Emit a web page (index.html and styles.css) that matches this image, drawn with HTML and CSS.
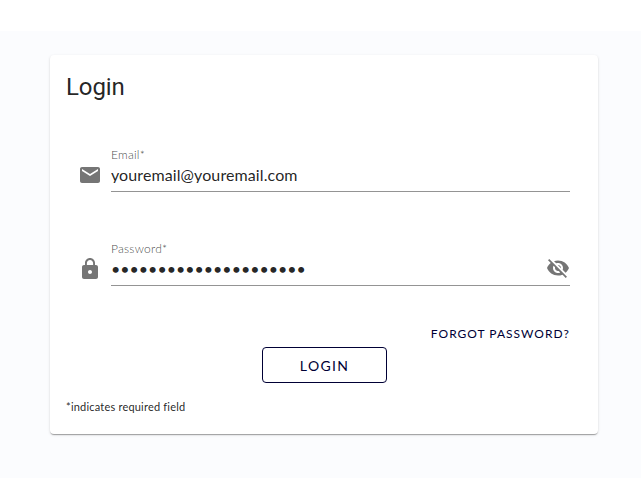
FILE: index.html
```html
<!DOCTYPE html>
<html lang="en">
<head>
    <meta charset="UTF-8">
    <meta name="viewport" content="width=device-width, initial-scale=1.0">
    <title>Login</title>
    <link rel="stylesheet" href="styles.css">
</head>
<body>
    <main class="page">
        <form class="card">
            <h1 class="card-title">Login</h1>

            <div class="field">
                <svg class="icon" viewBox="0 0 24 24"><path d="M20 4H4c-1.100 0-1.990.9-1.990 2L2 18c0 1.100.9 2 2 2h16c1.100 0 2-.9 2-2V6c0-1.100-.9-2-2-2zm0 4l-8 5-8-5V6l8 5 8-5v2z"/></svg>
                <div class="field-body">
                    <label class="field-label" for="email">Email*</label>
                    <div class="field-line">
                        <input type="text" id="email" class="field-input" value="youremail@youremail.com">
                    </div>
                </div>
            </div>

            <div class="field">
                <svg class="icon" viewBox="0 0 24 24"><path d="M18 8h-1V6c0-2.760-2.240-5-5-5S7 3.240 7 6v2H6c-1.100 0-2 .9-2 2v10c0 1.100.9 2 2 2h12c1.100 0 2-.9 2-2V10c0-1.100-.9-2-2-2zm-6 9c-1.100 0-2-.9-2-2s.9-2 2-2 2 .9 2 2-.9 2-2 2zm3.100-9H8.900V6c0-1.710 1.390-3.100 3.100-3.100s3.100 1.390 3.100 3.100v2z"/></svg>
                <div class="field-body">
                    <label class="field-label" for="password">Password*</label>
                    <div class="field-line">
                        <input type="password" id="password" class="field-input" value="123456789012345678901">
                        <svg class="icon" viewBox="0 0 24 24"><path d="M12 7c2.760 0 5 2.240 5 5 0 .65-.13 1.260-.36 1.830l2.920 2.920c1.510-1.260 2.700-2.890 3.430-4.750-1.730-4.390-6-7.500-11-7.500-1.400 0-2.740.25-3.980.7l2.160 2.160C10.740 7.130 11.350 7 12 7zM2 4.270l2.280 2.280.46.46C3.080 8.300 1.780 10.020 1 12c1.730 4.390 6 7.500 11 7.500 1.550 0 3.030-.3 4.380-.84l.42.42L19.730 22 21 20.730 3.270 3 2 4.270zM7.530 9.800l1.550 1.550c-.05.21-.08.43-.08.65 0 1.660 1.340 3 3 3 .22 0 .44-.03.65-.08l1.550 1.550c-.67.33-1.410.53-2.200.53-2.760 0-5-2.240-5-5 0-.79.2-1.530.53-2.200zm4.310-.78l3.150 3.150.02-.16c0-1.660-1.340-3-3-3l-.17.01z"/></svg>
                    </div>
                </div>
            </div>

            <div class="actions">
                <a class="forgot">FORGOT PASSWORD?</a>
                <button type="button" class="login-button">LOGIN</button>
            </div>
            <p class="note">*indicates required field</p>
        </form>
    </main>
</body>
</html>
```

FILE: styles.css
```css
*{
    box-sizing: border-box;
    padding: 0;
    margin: 0;
}
body{
    background-color: #fff;
    padding-top: 31px;
    font-family: Lato, sans-serif;
    color: rgba(0,0,0,0.87);
}
.page{
    height: 447px;
    padding: 24px 43px 0 50px;
    background-color: #fbfcfe;
}
.card{
    height: 379px;
    padding: 16px;
    background-color: #fff;
    border-radius: 4px;
    box-shadow: 0 2px 1px -1px rgba(0,0,0,0.2), 0 1px 1px 0 rgba(0,0,0,0.14), 0 1px 3px 0 rgba(0,0,0,0.12);
}
.card-title{
    font-family: Roboto, sans-serif;
    font-size: 24px;
    font-weight: 400;
    line-height: 32px;
    letter-spacing: -0.1px;
    margin-bottom: 29px;
}
.field{
    display: flex;
    align-items: flex-end;
    height: 60px;
    margin: 0 12px 34px 12px;
}
.icon{
    width: 24px;
    height: 24px;
    fill: #757575;
    flex: none;
    margin-bottom: 5px;
}
.field-body{
    flex: 1;
    margin-left: 9px;
}
.field-label{
    display: block;
    font-size: 12px;
    font-weight: 300;
    line-height: 14px;
    letter-spacing: 0.24px;
    color: rgba(0,0,0,0.75);
}
.field-line{
    display: flex;
    align-items: flex-end;
    height: 30px;
    border-bottom: 1px solid #949494;
}
.field-input{
    flex: 1;
    min-width: 0;
    height: 18px;
    margin-bottom: 8px;
    border: none;
    outline: none;
    background: none;
    font-family: Lato, sans-serif;
    font-size: 16px;
    color: rgba(0,0,0,0.87);
}
#email{
    letter-spacing: 0.1px;
}
.actions{
    display: flex;
    flex-direction: column;
    align-items: center;
    padding: 6px 12px 0 12px;
}
.forgot{
    align-self: flex-end;
    font-size: 12px;
    line-height: 16px;
    letter-spacing: 1px;
    color: #000035;
}
.login-button{
    width: 125px;
    height: 36px;
    margin-top: 5px;
    padding-left: 1px;
    border: 1px solid #000035;
    border-radius: 4px;
    background: #fff;
    font-family: Lato, sans-serif;
    font-size: 14px;
    letter-spacing: 1.3px;
    color: #000035;
}
.note{
    margin-top: 16px;
    font-size: 11px;
    line-height: 16px;
    letter-spacing: 0.2px;
}
```
